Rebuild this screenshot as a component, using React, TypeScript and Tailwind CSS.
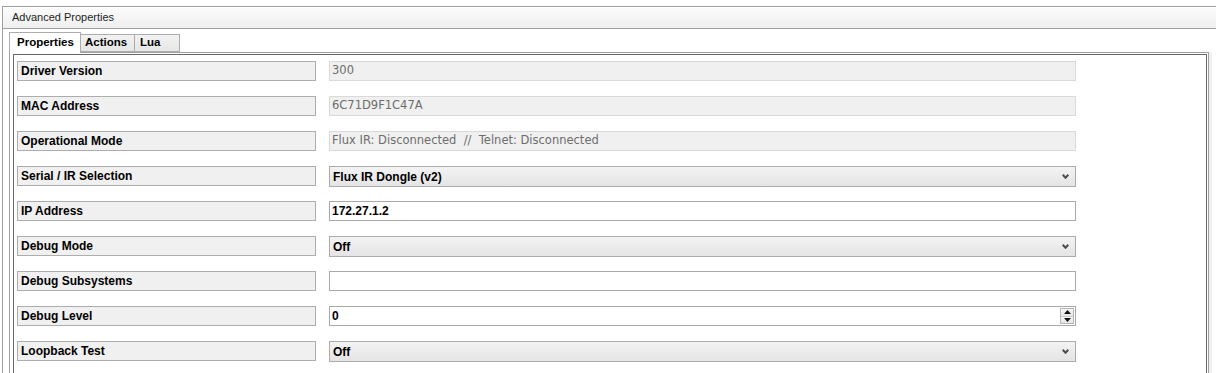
import React from 'react';

type Kind = 'disabled' | 'select' | 'text' | 'spin';

interface Row {
  label: string;
  kind: Kind;
  value: string;
}

const rows: Row[] = [
  { label: 'Driver Version', kind: 'disabled', value: '300' },
  { label: 'MAC Address', kind: 'disabled', value: '6C71D9F1C47A' },
  { label: 'Operational Mode', kind: 'disabled', value: 'Flux IR: Disconnected  //  Telnet: Disconnected' },
  { label: 'Serial / IR Selection', kind: 'select', value: 'Flux IR Dongle (v2)' },
  { label: 'IP Address', kind: 'text', value: '172.27.1.2' },
  { label: 'Debug Mode', kind: 'select', value: 'Off' },
  { label: 'Debug Subsystems', kind: 'text', value: '' },
  { label: 'Debug Level', kind: 'spin', value: '0' },
  { label: 'Loopback Test', kind: 'select', value: 'Off' },
];

const Chevron = () => (
  <svg width="7" height="5" viewBox="0 0 7 5" className="shrink-0">
    <path d="M0.7 0.8 L3.5 3.8 L6.3 0.8" fill="none" stroke="#4d4d4d" strokeWidth="2" />
  </svg>
);

const Spinner = () => (
  <div className="mr-[1px] flex h-[16px] w-[14px] flex-col border border-[#b5b5b5] bg-[#ececec]">
    <div className="flex flex-1 items-center justify-center border-b border-[#c8c8c8] bg-linear-to-b from-[#f6f6f6] to-[#e6e6e6]">
      <svg width="7" height="4" viewBox="0 0 7 4">
        <path d="M3.5 0 L7 4 L0 4 Z" fill="#111" />
      </svg>
    </div>
    <div className="flex flex-1 items-center justify-center bg-linear-to-b from-[#f6f6f6] to-[#e6e6e6]">
      <svg width="7" height="4" viewBox="0 0 7 4">
        <path d="M0 0 L7 0 L3.5 4 Z" fill="#111" />
      </svg>
    </div>
  </div>
);

const Value: React.FC<{ row: Row }> = ({ row }) => {
  if (row.kind === 'disabled') {
    return (
      <div className="flex h-[20px] w-[747px] items-center whitespace-pre border border-[#d9d9d9] bg-[#f0f0f0] pl-[2px] font-['DejaVu_Sans',sans-serif] text-[11.5px] text-[#6d6d6d]">
        {row.value}
      </div>
    );
  }
  if (row.kind === 'select') {
    return (
      <div className="flex h-[21px] w-[747px] items-center justify-between border border-[#acacac] bg-linear-to-b from-[#f3f3f3] to-[#e4e4e4] pl-[3px] pr-[6px] text-[12px] font-bold text-black">
        <span>{row.value}</span>
        <Chevron />
      </div>
    );
  }
  return (
    <div className="flex h-[20px] w-[747px] items-center justify-between border border-[#a9a9a9] bg-white pl-[2px] text-[12px] font-bold text-black">
      <span>{row.value}</span>
      {row.kind === 'spin' && <Spinner />}
    </div>
  );
};

export default function App() {
  return (
    <div className="h-[373px] w-[1216px] overflow-hidden bg-white pt-[6px] font-['Liberation_Sans',Arial,sans-serif] text-black">
      <div className="ml-[2px] h-full border-l border-t border-[#a0a0a0]">
        {/* header */}
        <div className="flex h-[22px] items-center border-b border-[#a0a0a0] bg-linear-to-b from-[#fcfcfc] to-[#efefef] pl-[9px] text-[11px] text-[#1e1e1e]">
          Advanced Properties
        </div>

        {/* tabs */}
        <div className="ml-[6px] mt-[3px] flex items-end">
          <div className="relative z-10 -mb-px flex h-[21px] w-[72px] items-center border border-b-0 border-[#acacac] bg-white pl-[7px] text-[11.5px] font-bold">
            Properties
          </div>
          <div className="flex h-[18px] w-[54px] items-center border border-l-0 border-[#acacac] bg-linear-to-b from-[#f2f2f2] to-[#e6e6e6] pl-[4px] text-[11.5px] font-bold">
            Actions
          </div>
          <div className="flex h-[18px] w-[45px] items-center border border-l-0 border-[#acacac] bg-linear-to-b from-[#f2f2f2] to-[#e6e6e6] pl-[5px] text-[11.5px] font-bold">
            Lua
          </div>
        </div>

        {/* tab page */}
        <div className="ml-[6px] w-[1200px] border border-b-0 border-[#a0a0a0] pl-[3px] pr-[1px] pt-[1px] shadow-[3px_0_0_#f0f0f0]">
          <div className="h-[340px] border border-b-0 border-[#696969] pl-[3px] pt-[6px]">
            <div className="flex flex-col gap-[15px]">
              {rows.map((row) => (
                <div key={row.label} className="flex h-[20px] items-start gap-[13px]">
                  <div className="flex h-[20px] w-[299px] items-center border border-[#adadad] bg-[#f0f0f0] pl-[3px] text-[12px] font-bold">
                    {row.label}
                  </div>
                  <Value row={row} />
                </div>
              ))}
            </div>
          </div>
        </div>
      </div>
    </div>
  );
}
